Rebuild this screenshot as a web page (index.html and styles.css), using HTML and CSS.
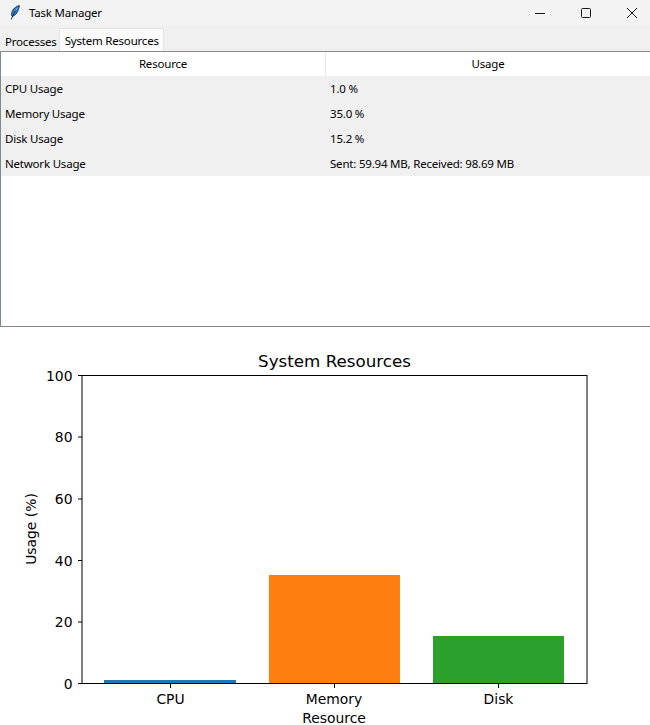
FILE: index.html
```html
<!DOCTYPE html>
<html lang="en">
<head>
    <meta charset="UTF-8">
    <title>Task Manager</title>
    <link rel="stylesheet" href="styles.css">
</head>
<body>
    <div class="titlebar">
        <svg class="app-icon" width="16" height="16" viewBox="0 0 16 16">
            <path d="M12.4 0.6 C9 1.2 5.6 4 4.7 7.6 C4.2 9.4 4.4 10.6 5 11.4 C7.6 11 9.8 8.8 10.9 6 C11.7 4 12.5 2.2 12.4 0.6 Z" fill="#2a78c8" stroke="#14304f" stroke-width="0.8"/>
            <path d="M10.6 3 C9 4.2 7.6 5.8 6.8 7.6" stroke="#8cc4f0" stroke-width="1" fill="none"/>
            <path d="M8.4 5.4 L4.2 14.4" stroke="#14304f" stroke-width="1" fill="none"/>
        </svg>
        <span class="app-title">Task Manager</span>
        <div class="win-buttons">
            <svg class="win-btn" width="46" height="24" viewBox="-5 0 46 24"><path d="M18 12.5 H28" stroke="#1a1a1a" fill="none"/></svg>
            <svg class="win-btn" width="46" height="24" viewBox="-5 0 46 24"><rect x="18.5" y="7.5" width="9" height="9" rx="1" stroke="#1a1a1a" fill="none"/></svg>
            <svg class="win-btn" width="46" height="24" viewBox="-5 0 46 24"><path d="M18 7 L28 17 M28 7 L18 17" stroke="#1a1a1a" fill="none"/></svg>
        </div>
    </div>

    <div class="tabs">
        <div class="tab">Processes</div>
        <div class="tab active">System Resources</div>
    </div>

    <div class="panel">
        <div class="row head">
            <div class="cell col-res">Resource</div>
            <div class="cell col-use">Usage</div>
        </div>
        <div class="row">
            <div class="cell col-res">CPU Usage</div>
            <div class="cell col-use">1.0 %</div>
        </div>
        <div class="row">
            <div class="cell col-res">Memory Usage</div>
            <div class="cell col-use">35.0 %</div>
        </div>
        <div class="row">
            <div class="cell col-res">Disk Usage</div>
            <div class="cell col-use">15.2 %</div>
        </div>
        <div class="row">
            <div class="cell col-res">Network Usage</div>
            <div class="cell col-use">Sent: 59.94 MB, Received: 98.69 MB</div>
        </div>
    </div>

    <svg class="chart" width="650" height="398" viewBox="0 327 650 398">
        <!-- bars -->
        <rect x="104" y="680" width="132" height="3" fill="#1f77b4"/>
        <rect x="269" y="575" width="131" height="108" fill="#ff7f0e"/>
        <rect x="433" y="636" width="131" height="47" fill="#2ca02c"/>

        <!-- axes box -->
        <rect x="82" y="375.5" width="505" height="308" fill="none" stroke="#000" stroke-width="1"/>

        <!-- y ticks -->
        <path d="M78 375.5 H82 M78 437 H82 M78 499 H82 M78 560.5 H82 M78 622 H82 M78 683.5 H82" stroke="#000" fill="none"/>
        <!-- x ticks -->
        <path d="M170.5 684 V688 M334.5 684 V688 M498.5 684 V688" stroke="#000" fill="none"/>

        <g class="tick-y">
            <text x="72.5" y="380.5">100</text>
            <text x="72.5" y="442">80</text>
            <text x="72.5" y="504">60</text>
            <text x="72.5" y="565.5">40</text>
            <text x="72.5" y="627">20</text>
            <text x="72.5" y="688.5">0</text>
        </g>
        <g class="tick-x">
            <text x="170.5" y="704">CPU</text>
            <text x="334" y="704">Memory</text>
            <text x="498.5" y="704">Disk</text>
        </g>
        <text class="chart-title" x="334.5" y="367">System Resources</text>
        <text class="tick-x" x="334" y="723">Resource</text>
        <text class="axis-y" transform="translate(36 529) rotate(-90)">Usage (%)</text>
    </svg>
</body>
</html>
```

FILE: styles.css
```css
/* Global Styles */
body {
    margin: 0;
    padding: 0;
    width: 650px;
    height: 725px;
    overflow: hidden;
    background-color: #ffffff;
    font-family: "Noto Sans", "Open Sans", Arial, sans-serif;
    font-size: 11.5px;
    letter-spacing: -0.2px;
    color: #000000;
}

/* window title bar */
.titlebar {
    height: 25px;
    display: flex;
    align-items: center;
    background-color: #f3f3f3;
    padding-left: 7px;
}

.app-icon {
    margin-right: 6px;
}

.win-buttons {
    margin-left: auto;
    display: flex;
}

.win-btn {
    display: block;
}

/* notebook tabs */
.tabs {
    height: 26px;
    display: flex;
    align-items: flex-end;
    background-color: #f0f0f0;
    padding-left: 2px;
}

.tab {
    height: 20px;
    padding: 0 2px 0 3px;
    line-height: 21px;
}

.tab.active {
    height: 23px;
    line-height: 23px;
    padding: 0 4px 0 5px;
    background-color: #fbfbfb;
    border: 1px solid #e4e4e4;
    border-bottom: none;
    box-sizing: border-box;
}

/* resource table */
.panel {
    height: 276px;
    box-sizing: border-box;
    border-top: 1px solid #8a8a8a;
    border-left: 1px solid #7f8694;
    border-bottom: 1px solid #7f8694;
    background-color: #ffffff;
}

.row {
    height: 25px;
    display: flex;
    align-items: center;
    background-color: #f0f0f0;
}

.row.head {
    height: 24px;
    background-color: #ffffff;
}

.col-res {
    width: 325px;
    box-sizing: border-box;
    padding-left: 4px;
}

.col-use {
    flex: 1;
    padding-left: 4px;
}

.head .cell {
    height: 24px;
    line-height: 24px;
    text-align: center;
    padding: 0;
}

.head .col-res {
    border-right: 1px solid #e8e8e8;
}

/* matplotlib chart */
.chart {
    display: block;
    font-family: "DejaVu Sans", sans-serif;
    font-size: 13.9px;
    letter-spacing: 0;
    fill: #000000;
}

.tick-y text {
    text-anchor: end;
}

.tick-x,
.tick-x text {
    text-anchor: middle;
}

.chart-title {
    font-size: 16.7px;
    text-anchor: middle;
}

.axis-y {
    text-anchor: middle;
}
```
